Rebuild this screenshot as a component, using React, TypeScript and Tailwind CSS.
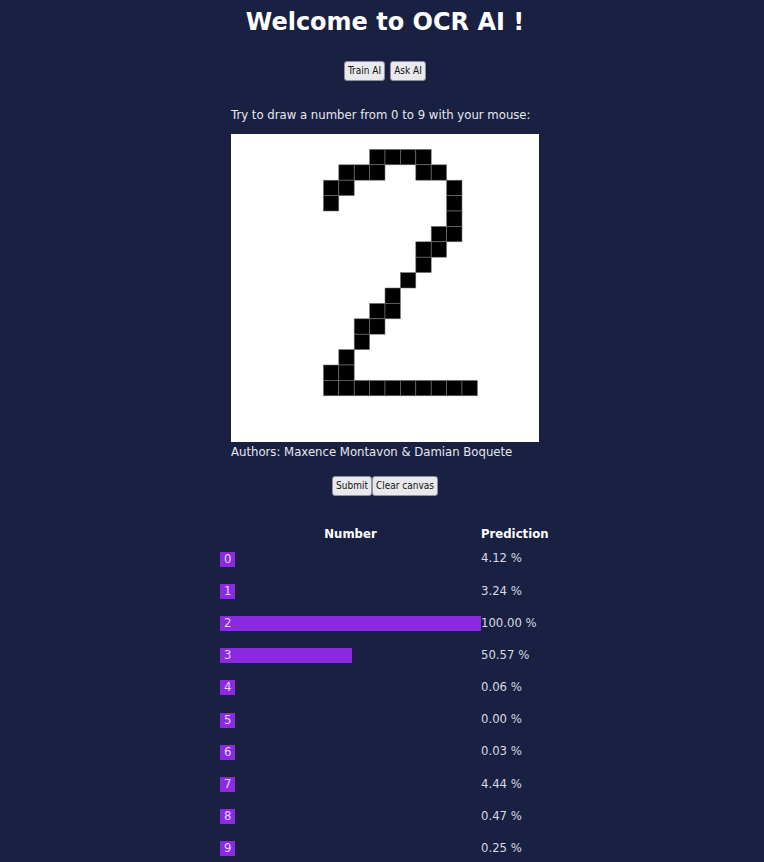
import React from "react";

const rows: number[][] = [
  [],
  [9, 10, 11, 12],
  [7, 8, 9, 12, 13],
  [6, 7, 14],
  [6, 14],
  [14],
  [13, 14],
  [12, 13],
  [12],
  [11],
  [10],
  [9, 10],
  [8, 9],
  [8],
  [7],
  [6, 7],
  [6, 7, 8, 9, 10, 11, 12, 13, 14, 15],
];

const preds = [4.12, 3.24, 100.0, 50.57, 0.06, 0.0, 0.03, 4.44, 0.47, 0.25];

function Btn({ children }: { children: React.ReactNode }) {
  return (
    <button className="h-[20px] px-[3px] rounded-[3px] border border-[#8f8f9d] bg-[#e9e9ed] text-[#111] text-[10px] leading-none font-['DejaVu_Sans_Condensed','DejaVu_Sans',sans-serif] [font-stretch:condensed]">
      {children}
    </button>
  );
}

export default function App() {
  const cell = 15.4;
  return (
    <div className="min-h-[862px] w-full bg-[#192041] text-[#e6e8ef] font-['DejaVu_Sans',sans-serif] flex flex-col items-center pl-[6px]">
      <h1 className="mt-[8px] text-[24px] leading-[28px] font-bold text-white">Welcome to OCR AI !</h1>
      <div className="mt-[25px] flex gap-[5px]">
        <Btn>Train AI</Btn>
        <Btn>Ask AI</Btn>
      </div>
      <div className="w-[308px] flex flex-col">
        <p className="mt-[26px] text-[11.7px] leading-[16px] whitespace-nowrap">Try to draw a number from 0 to 9 with your mouse:</p>
        <div className="mt-[11px] w-[308px] h-[308px] bg-white">
          <svg width="308" height="308" viewBox="0 0 308 308">
            {rows.map((cols, r) =>
              cols.map((c) => (
                <rect
                  key={`${r}-${c}`}
                  x={c * cell}
                  y={r * cell}
                  width={cell}
                  height={cell}
                  fill="#000"
                  stroke="#777"
                  strokeWidth={0.6}
                />
              ))
            )}
          </svg>
        </div>
        <p className="mt-[2px] text-[11.7px] leading-[16px] whitespace-nowrap">Authors: Maxence Montavon &amp; Damian Boquete</p>
      </div>
      <div className="mt-[16px] flex">
        <Btn>Submit</Btn>
        <Btn>Clear canvas</Btn>
      </div>
      <div className="mt-[31px] flex flex-col w-[328px] mr-[2px] text-[11.7px]">
        <div className="flex h-[16px] items-center font-bold text-white">
          <div className="w-[261px] text-center">Number</div>
          <div className="w-[67px] text-center whitespace-nowrap">Prediction</div>
        </div>
        <div className="flex flex-col">
          {preds.map((p, i) => (
            <div key={i} className="flex h-[32.2px] items-center">
              <div className="w-[261px] flex">
                <div
                  className="h-[15px] min-w-fit bg-[#8a2be2] text-[#e6d6f7] px-[4px] leading-[15px]"
                  style={{ width: `${p}%` }}
                >
                  {i}
                </div>
              </div>
              <div className="w-[67px] whitespace-nowrap text-[#d8dbe6]">{p.toFixed(2)} %</div>
            </div>
          ))}
        </div>
      </div>
    </div>
  );
}
